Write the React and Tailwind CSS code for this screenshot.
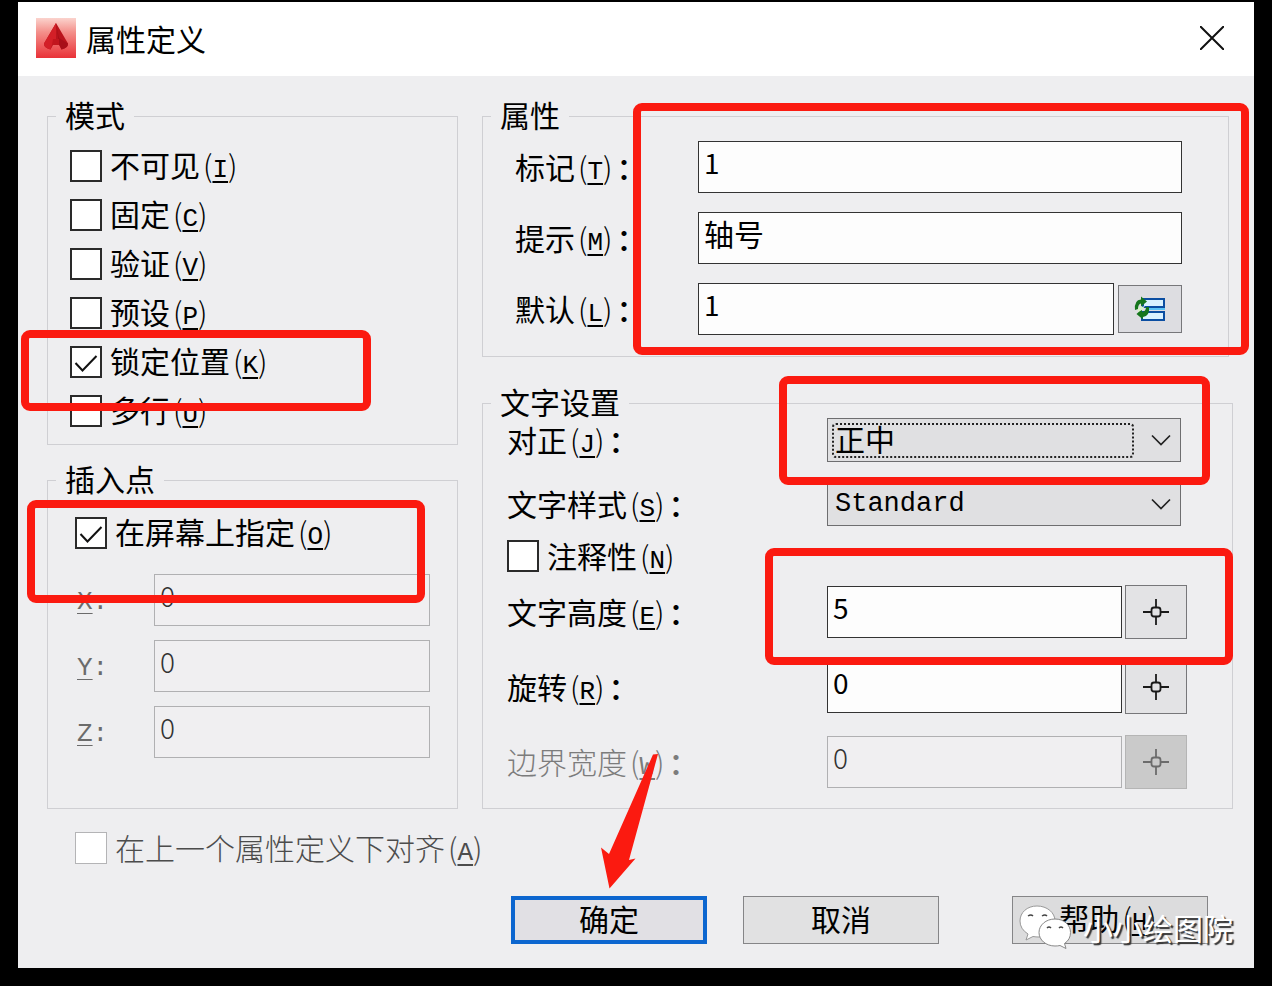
import React from 'react';
import { useState } from 'react';

const modes = [
    { id: 'invisible', text: '不可见', hotkey: 'I' },
    { id: 'constant', text: '固定', hotkey: 'C' },
    { id: 'verify', text: '验证', hotkey: 'V' },
    { id: 'preset', text: '预设', hotkey: 'P' },
    { id: 'lock', text: '锁定位置', hotkey: 'K' },
    { id: 'multiline', text: '多行', hotkey: 'U' },
];

// Label text followed by its underlined hotkey, e.g. 固定(C)
function HotkeyText({ text, hotkey, colon }) {
    return (
        <>
            {text}
            <span className="pr-1 pl-[3px]">
                <span className="font-light">(</span>
                <span className="font-['Liberation_Mono',monospace] text-[26px] leading-none underline decoration-2 underline-offset-4">{hotkey}</span>
                <span className="font-light">)</span>
            </span>
            {colon && <span className="font-medium">：</span>}
        </>
    );
}

function CheckBox({ id, text, hotkey, checked, onChange, disabled }) {
    return (
        <div className={disabled ? 'flex h-8 items-center gap-2 text-[#4c4c4c]' : 'flex h-8 items-center gap-2'}>
            <span className="relative block size-8 shrink-0">
                <input
                    id={id}
                    type="checkbox"
                    checked={checked}
                    disabled={disabled}
                    onChange={onChange}
                    className="block size-8 appearance-none border-2 border-[#2a2a2a] bg-white disabled:border disabled:border-[#b4b4b6]"
                />
                {checked && (
                    <svg viewBox="0 0 32 32" className="pointer-events-none absolute inset-0 size-8" fill="none" stroke="#111" strokeWidth="2">
                        <path d="M5.500 17l7 7.500L26.500 10" />
                    </svg>
                )}
            </span>
            <label htmlFor={id} className={disabled ? 'whitespace-nowrap font-light' : 'whitespace-nowrap'}>
                <HotkeyText text={text} hotkey={hotkey} />
            </label>
        </div>
    );
}

function TextBox({ id, value, onChange, disabled, className = 'text-[28px]' }) {
    return (
        <input
            id={id}
            type="text"
            value={value}
            disabled={disabled}
            onChange={onChange}
            className={`h-[52px] w-full min-w-0 flex-1 border border-[#333] bg-[#fdfdfd] px-[5px] pb-[10px] leading-8 disabled:border-[#b0b0b2] disabled:bg-[#f0eff1] disabled:font-light disabled:text-[#333] ${className}`}
        />
    );
}

function SelectBox({ id, options, focused, className }) {
    return (
        <div className="relative mr-[6px] flex-1">
            <select
                id={id}
                className={`block h-11 w-full appearance-none border border-[#6e6e70] bg-[#e0e0e2] pr-12 pl-[7px] outline-none ${className}`}
            >
                {options.map((option) => (
                    <option key={option}>{option}</option>
                ))}
            </select>
            {focused && (
                <span className="pointer-events-none absolute top-[5px] right-[47px] bottom-[4px] left-[5px] rounded-sm border-2 border-dotted border-[#222]"></span>
            )}
            <svg viewBox="0 0 20 12" className="pointer-events-none absolute top-4 right-[10px] h-3 w-5" fill="none" stroke="#222" strokeWidth="1.700">
                <path d="M1 1.500l9 9 9-9" />
            </svg>
        </div>
    );
}

function PickButton({ label, disabled }) {
    return (
        <button
            type="button"
            aria-label={label}
            disabled={disabled}
            className="ml-[3px] flex h-[54px] w-[62px] shrink-0 items-center justify-center border border-[#77777a] bg-[#e3e3e5] text-[#1a1a1a] disabled:border-[#b5b5b5] disabled:bg-[#cacaca] disabled:text-[#6c6c6c]"
        >
            <svg viewBox="0 0 26 26" className="size-[26px]" fill="none" stroke="currentColor" strokeWidth="1.800">
                <rect x="8.500" y="8.500" width="9" height="9" rx="2.500" />
                <path d="M13 0v8.500M13 17.500V26M0 13h8.500M17.500 13H26" />
            </svg>
        </button>
    );
}

function GroupBox({ title, className, children }) {
    return (
        <fieldset className={`border border-[#cfcfd3] ${className}`}>
            <legend className="-ml-[var(--inset)] h-[30px] px-[9px] leading-[26px]">{title}</legend>
            {children}
        </fieldset>
    );
}

// Red marker frame drawn over the controls
function Marker({ className }) {
    return <div className={`pointer-events-none absolute z-10 rounded-[9px] border-8 border-[#fb1a10] ${className}`}></div>;
}

function AttributeDefinition() {
    const [checked, setChecked] = useState({ lock: true, onScreen: true });
    const [values, setValues] = useState({ tag: '1', prompt: '轴号', preset: '1', height: '5', rotation: '0' });

    const toggle = (id) => () => setChecked({ ...checked, [id]: !checked[id] });
    const edit = (id) => (event) => setValues({ ...values, [id]: event.target.value });

    return (
        <div className="min-h-screen bg-black px-[18px] pt-[2px] pb-[18px] font-['Noto_Sans_CJK_SC',sans-serif] text-[30px] leading-8 text-black">
            <div className="bg-[#eeeef0]">
                {/* Title bar */}
                <header className="flex h-[74px] items-center justify-between bg-white pr-[30px] pb-[2px] pl-[18px]">
                    <div className="flex items-center gap-[10px]">
                        <svg viewBox="0 0 40 40" className="size-10">
                            <defs>
                                <linearGradient id="logoBack" x1="0" y1="0" x2="0" y2="1">
                                    <stop offset="0" stopColor="#fbd3cd" />
                                    <stop offset="0.350" stopColor="#f4908b" />
                                    <stop offset="1" stopColor="#e93238" />
                                </linearGradient>
                            </defs>
                            <rect width="40" height="40" fill="url(#logoBack)" />
                            <path d="M20 5L8 25.500q0 4.500 6.500 6L17 27h6l2.500 4.500q6.500-1.500 6.500-6z" fill="#b9141c" />
                            <path d="M20 5v16l-4 6-1.500 4.500Q8 30 8 25.500z" fill="#d31f27" />
                            <path d="M20 5l3 15 9 5.500q0 4.500-6.500 6L23 26z" fill="#a80f18" />
                            <path d="M17 21h6v6h-7z" fill="#c2161e" />
                        </svg>
                        <h1>属性定义</h1>
                    </div>
                    <button type="button" aria-label="关闭" className="p-0">
                        <svg viewBox="0 0 24 24" className="size-6" stroke="#111" strokeWidth="2">
                            <path d="M0 0l24 24M24 0L0 24" />
                        </svg>
                    </button>
                </header>

                <form className="pt-[25px] pr-[21px] pb-6 pl-[29px]" onSubmit={(event) => event.preventDefault()}>
                    <div className="grid grid-cols-[411px_1fr] gap-6">
                        <div className="flex flex-col gap-5">
                            {/* Mode */}
                            <div className="relative">
                                <GroupBox title="模式" className="px-[22px] pb-[9px] [--inset:14px]">
                                    <div className="pt-[10px]">
                                        {modes.map((mode) => (
                                            <div key={mode.id} className="flex h-[49px] items-center">
                                                <CheckBox {...mode} checked={!!checked[mode.id]} onChange={toggle(mode.id)} />
                                            </div>
                                        ))}
                                    </div>
                                </GroupBox>
                                <Marker className="top-[229px] right-[87px] bottom-[34px] -left-[26px]" />
                            </div>

                            {/* Insertion point */}
                            <div className="relative flex-1">
                                <GroupBox title="插入点" className="h-full px-[27px] [--inset:19px]">
                                    <div className="flex h-[79px] items-center pb-1">
                                        <CheckBox id="onScreen" text="在屏幕上指定" hotkey="O" checked={checked.onScreen} onChange={toggle('onScreen')} />
                                    </div>
                                    <div className="flex flex-col gap-[14px]">
                                        {['X', 'Y', 'Z'].map((axis) => (
                                            <div key={axis} className="flex items-center">
                                                <label htmlFor={axis} className="w-[79px] pt-1 pl-[2px] font-['Liberation_Mono',monospace] text-[26px] text-[#6b6b6b]">
                                                    <span className="underline decoration-1 underline-offset-4">{axis}</span>:
                                                </label>
                                                <TextBox id={axis} value="0" disabled />
                                            </div>
                                        ))}
                                    </div>
                                </GroupBox>
                                <Marker className="top-[35px] right-[33px] bottom-[206px] -left-[20px]" />
                            </div>
                        </div>

                        <div className="flex flex-col gap-[31px]">
                            {/* Attribute */}
                            <div className="relative mr-1">
                                <GroupBox title="属性" className="pr-[46px] pb-[21px] pl-8 [--inset:24px]">
                                    <div className="flex flex-col gap-[19px] pt-[10px]">
                                        <div className="flex items-center">
                                            <label htmlFor="tag" className="w-[183px]"><HotkeyText text="标记" hotkey="T" colon /></label>
                                            <TextBox id="tag" value={values.tag} onChange={edit('tag')} />
                                        </div>
                                        <div className="flex items-center">
                                            <label htmlFor="prompt" className="w-[183px]"><HotkeyText text="提示" hotkey="M" colon /></label>
                                            <TextBox id="prompt" value={values.prompt} onChange={edit('prompt')} className="text-[30px]" />
                                        </div>
                                        <div className="flex items-center">
                                            <label htmlFor="preset-value" className="w-[183px]"><HotkeyText text="默认" hotkey="L" colon /></label>
                                            <TextBox id="preset-value" value={values.preset} onChange={edit('preset')} />
                                            <button type="button" aria-label="插入字段" className="ml-1 flex h-12 w-16 items-center justify-center border border-[#77777a] bg-[#dddde1]">
                                                <svg viewBox="0 0 32 26" className="h-[26px] w-8">
                                                    <rect x="9" y="3" width="21" height="8" fill="#d9f2ff" stroke="#0b4ea2" strokeWidth="2" />
                                                    <path d="M14 13h17" stroke="#5cc4f5" strokeWidth="2" />
                                                    <rect x="8" y="16" width="22" height="8" fill="#d9f2ff" stroke="#0b4ea2" strokeWidth="2" />
                                                    <path d="M1 14Q0 4 7 3.500V.5l6 5-6 5V7.500Q4 8 4 13z" fill="#15761c" />
                                                    <path d="M15 11q1 9-6 10v2.500L2.500 18 8 13v3q4-.5 4-5z" fill="#15761c" />
                                                    <path d="M4 12l7-2-3 4-4 2z" fill="#d6f5c4" />
                                                </svg>
                                            </button>
                                        </div>
                                    </div>
                                </GroupBox>
                                <Marker className="top-[2px] -right-[20px] bottom-[2px] left-[151px]" />
                            </div>

                            {/* Text settings */}
                            <div className="relative flex-1">
                                <GroupBox title="文字设置" className="pr-[45px] pb-[19px] pl-6 [--inset:16px]">
                                    <div className="flex items-center">
                                        <label htmlFor="justify" className="w-[320px]"><HotkeyText text="对正" hotkey="J" colon /></label>
                                        <SelectBox id="justify" options={['正中', '左对齐', '右对齐']} focused className="pb-1 text-[30px]" />
                                    </div>
                                    <div className="mt-5 flex items-center">
                                        <label htmlFor="style" className="w-[320px]"><HotkeyText text="文字样式" hotkey="S" colon /></label>
                                        <SelectBox id="style" options={['Standard']} className="font-['Liberation_Mono',monospace] text-[27px]" />
                                    </div>
                                    <div className="mt-[14px] mb-[13px]">
                                        <CheckBox id="annotative" text="注释性" hotkey="N" checked={!!checked.annotative} onChange={toggle('annotative')} />
                                    </div>
                                    <div className="flex flex-col gap-[21px]">
                                        <div className="flex items-center">
                                            <label htmlFor="height" className="w-[320px]"><HotkeyText text="文字高度" hotkey="E" colon /></label>
                                            <TextBox id="height" value={values.height} onChange={edit('height')} />
                                            <PickButton label="拾取高度" />
                                        </div>
                                        <div className="flex items-center">
                                            <label htmlFor="rotation" className="w-[320px]"><HotkeyText text="旋转" hotkey="R" colon /></label>
                                            <TextBox id="rotation" value={values.rotation} onChange={edit('rotation')} />
                                            <PickButton label="拾取角度" />
                                        </div>
                                        <div className="flex items-center">
                                            <label htmlFor="width" className="w-[320px] font-light text-[#7c7c7c]"><HotkeyText text="边界宽度" hotkey="W" colon /></label>
                                            <TextBox id="width" value="0" disabled />
                                            <PickButton label="拾取宽度" disabled />
                                        </div>
                                    </div>
                                </GroupBox>
                                <Marker className="-top-[12px] right-[23px] left-[297px] h-[109px]" />
                                <Marker className="top-[160px] right-0 left-[283px] h-[117px]" />
                                {/* Arrow that points at the OK button */}
                                <svg viewBox="0 0 60 136" className="pointer-events-none absolute top-[365px] left-[118px] z-10 h-[136px] w-[60px]" fill="#fb1a10">
                                    <path d="M53 1.500L58 1 29 107 35.500 105.500 9.500 135.500 1 94.500 9 101z" />
                                </svg>
                            </div>
                        </div>
                    </div>

                    <div className="mt-[23px] pl-7">
                        <CheckBox id="align" text="在上一个属性定义下对齐" hotkey="A" checked={false} disabled />
                    </div>

                    {/* Footer buttons */}
                    <div className="relative mt-8 flex justify-end gap-9 pr-[25px]">
                        <button type="submit" className="h-12 w-[196px] border-4 border-[#0c66cf] bg-[#e1e0e4] pb-1">确定</button>
                        <button type="button" className="h-12 w-[196px] border border-[#858587] bg-[#e1e1e2] pb-1">取消</button>
                        <button type="button" className="ml-[37px] h-12 w-[196px] border border-[#858587] bg-[#dcdcdd] pb-1">
                            <HotkeyText text="帮助" hotkey="H" />
                        </button>
                        {/* Account watermark */}
                        <div className="pointer-events-none absolute top-[9px] right-0 flex items-center gap-3 text-white">
                            <svg viewBox="0 0 52 44" className="h-11 w-[52px]">
                                <path d="M18 1C8 1 1 7.500 1 16q0 8 8 13l-2 6 7-3.500q3 .5 6 .5 16-1 16-16C36 7.500 28 1 18 1z" fill="#fff" stroke="#999" strokeWidth="1" />
                                <path d="M36 14c-9 0-16 6-16 13.500S27 41 36 41q3 0 5-.5l6 3-1.500-5q6-4 6-11C51.500 20 45 14 36 14z" fill="#fff" stroke="#888" strokeWidth="1" />
                                <path d="M9 11q3-2 5 0M23 11q3-2 5 0M28 23q2-2 4 0M40 23q2-2 4 0" fill="none" stroke="#444" strokeWidth="1.500" />
                            </svg>
                            <span className="[text-shadow:2px_2px_1px_#333]">小小绘图院</span>
                        </div>
                    </div>
                </form>
            </div>
        </div>
    );
}

export default AttributeDefinition;
